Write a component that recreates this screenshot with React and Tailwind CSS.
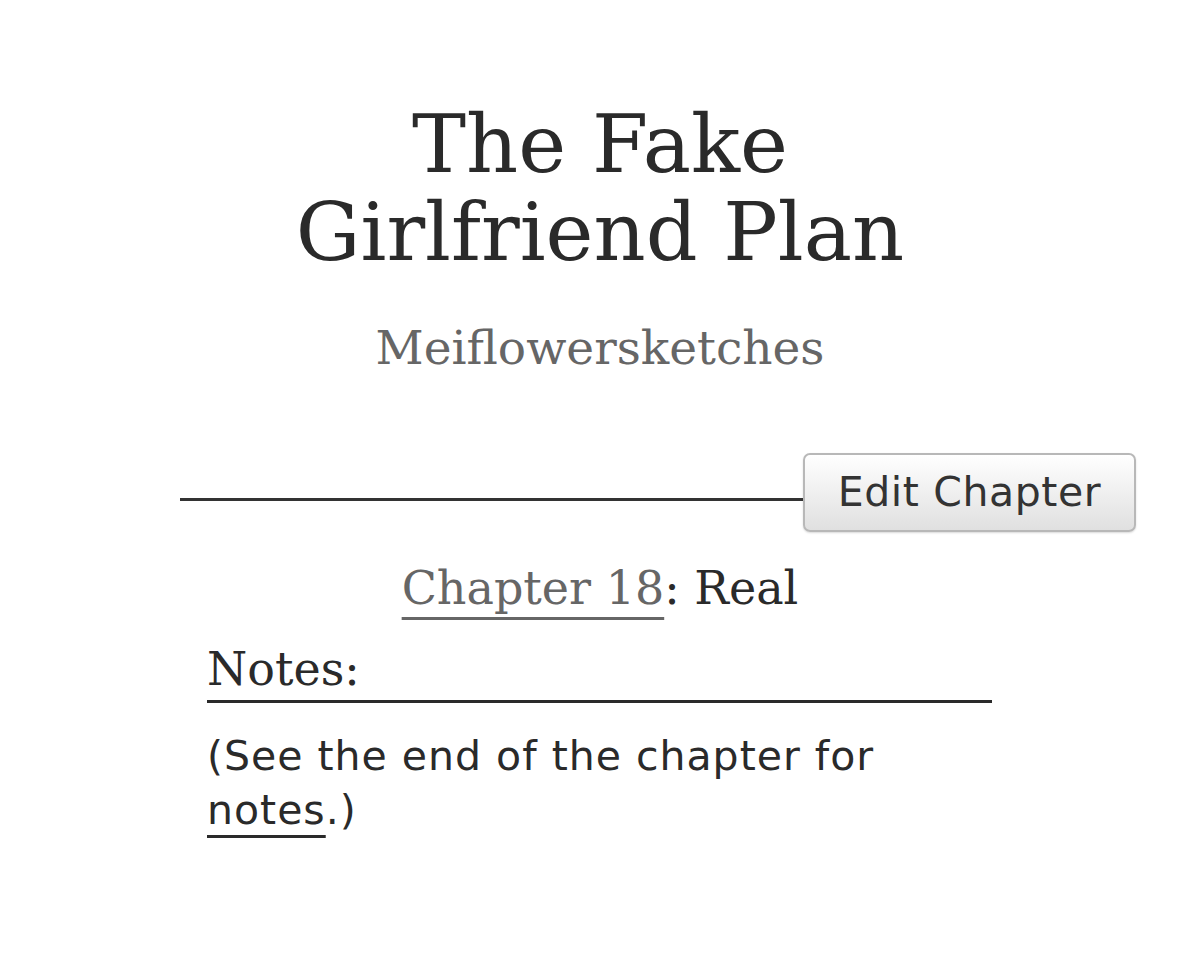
export default function App() {
  const serif = { fontFamily: '"DejaVu Serif", Georgia, serif' };
  return (
    <div className="min-h-[974px] bg-white text-[#2a2a2a]" style={{ fontFamily: '"DejaVu Sans", Verdana, sans-serif' }}>
      <div className="pt-[100px]">
        <h2 className="text-center text-[81px] leading-[88px] font-normal text-[#2a2a2a]" style={serif}>
          The Fake
          <br />
          Girlfriend Plan
        </h2>
        <h3 className="mt-[42px] text-center text-[47px] leading-[60px] font-normal text-[#666]" style={serif}>
          Meiflowersketches
        </h3>
      </div>

      <div className="mt-[75px] ml-[180px] flex w-[956px] items-center">
        <div className="mt-[14px] h-[3px] flex-1 bg-[#333]" />
        <button className="h-[79px] w-[333px] rounded-[7px] border-2 border-[#b8b8b8] bg-gradient-to-b from-white to-[#e0e0e0] text-[41px] tracking-[0.6px] text-[#333] shadow-[0_1px_2px_rgba(0,0,0,0.15)]">
          Edit Chapter
        </button>
      </div>

      <h3 className="mt-[24px] text-center text-[46px] leading-[64px] font-normal" style={serif}>
        <a className="text-[#666] underline decoration-[3px] underline-offset-[13px]">Chapter 18</a>
        <span className="text-[#2a2a2a]">: Real</span>
      </h3>

      <div className="ml-[207px] mt-[22px] w-[785px]">
        <h3 className="border-b-[3px] border-[#2a2a2a] pb-[4px] text-[46px] leading-[54px] font-normal" style={serif}>
          Notes:
        </h3>
        <p className="mt-[26px] text-[41px] leading-[54px] tracking-[1px] text-[#2a2a2a]">
          (See the end of the chapter for{' '}
          <a className="underline decoration-[3px] underline-offset-[11px]">notes</a>.)
        </p>
      </div>
    </div>
  );
}
